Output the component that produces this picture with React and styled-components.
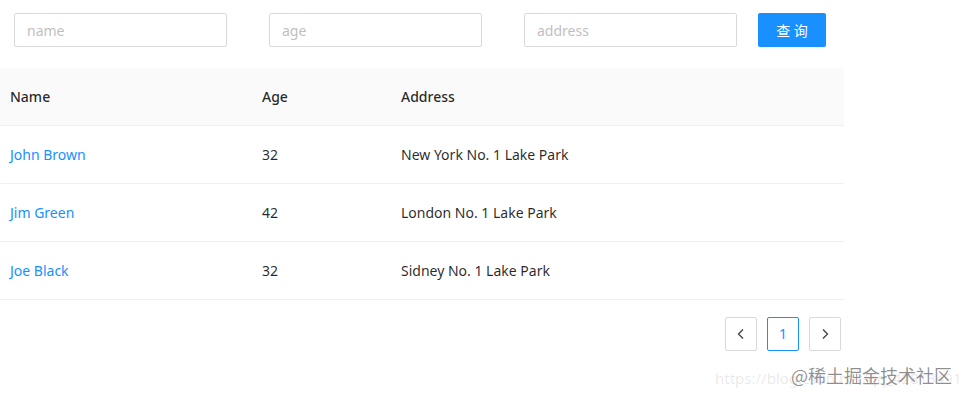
import styled, { createGlobalStyle } from "styled-components";

const GlobalStyle = createGlobalStyle`
  body {
    margin: 0;
    background: #fff;
    font-family: "Noto Sans", "Noto Sans CJK SC", sans-serif;
    font-size: 14px;
    color: rgba(0, 0, 0, 0.85);
  }
`;

const data = [
  { key: 1, name: "John Brown", age: 32, address: "New York No. 1 Lake Park" },
  { key: 2, name: "Jim Green", age: 42, address: "London No. 1 Lake Park" },
  { key: 3, name: "Joe Black", age: 32, address: "Sidney No. 1 Lake Park" },
];

function App() {
  return (
    <Page>
      <GlobalStyle />
      {/* 검색 영역 */}
      <SearchBar>
        <Input placeholder="name" />
        <Input placeholder="age" />
        <Input placeholder="address" />
        <Button>查 询</Button>
      </SearchBar>

      <Table>
        <thead>
          <tr>
            <Th $w={252}>Name</Th>
            <Th $w={139}>Age</Th>
            <Th>Address</Th>
          </tr>
        </thead>
        <tbody>
          {data.map((row) => (
            <tr key={row.key}>
              <Td>
                <NameLink href="#">{row.name}</NameLink>
              </Td>
              <Td>{row.age}</Td>
              <Td>{row.address}</Td>
            </tr>
          ))}
        </tbody>
      </Table>

      <Pager>
        <PageItem>
          <svg width="12" height="12" viewBox="0 0 12 12" fill="none">
            <path d="M8 1.5 3.5 6 8 10.5" stroke="rgba(0,0,0,0.75)" strokeWidth="1.3" />
          </svg>
        </PageItem>
        <PageItem $active>1</PageItem>
        <PageItem>
          <svg width="12" height="12" viewBox="0 0 12 12" fill="none">
            <path d="M4 1.5 8.5 6 4 10.5" stroke="rgba(0,0,0,0.75)" strokeWidth="1.3" />
          </svg>
        </PageItem>
      </Pager>

      <Watermark>
        <Faint>https://blog.csdn.net/qq_42813491</Faint>
        <Mark>@稀土掘金技术社区</Mark>
      </Watermark>
    </Page>
  );
}

export default App;

const Page = styled.div`
  position: relative;
  width: 967px;
  height: 400px;
  overflow: hidden;
`;

const SearchBar = styled.div`
  display: flex;
  align-items: flex-start;
  gap: 42px;
  padding: 13px 0 0 14px;
  height: 55px;
  box-sizing: border-box;
`;

const Input = styled.input`
  width: 213px;
  height: 34px;
  box-sizing: border-box;
  border: 1px solid #d9d9d9;
  border-radius: 2px;
  padding: 4px 12px;
  font-family: inherit;
  font-size: 14px;
  outline: none;

  &::placeholder {
    color: #bfbfbf;
  }
`;

const Button = styled.button`
  margin-left: -21px;
  width: 68px;
  height: 34px;
  border: none;
  border-radius: 2px;
  background: #1890ff;
  color: #fff;
  font-family: inherit;
  font-size: 14px;
  cursor: pointer;
`;

const Table = styled.table`
  margin-top: 13px;
  width: 844px;
  border-collapse: collapse;
  table-layout: fixed;
  text-align: left;
`;

const Th = styled.th`
  width: ${(p) => (p.$w ? `${p.$w}px` : "auto")};
  height: 57px;
  padding: 0 10px;
  box-sizing: border-box;
  background: #fafafa;
  font-weight: 500;
  color: rgba(0, 0, 0, 0.85);
  border-bottom: 1px solid #f0f0f0;
`;

const Td = styled.td`
  height: 58px;
  padding: 0 10px;
  box-sizing: border-box;
  border-bottom: 1px solid #f0f0f0;
  color: rgba(0, 0, 0, 0.85);
`;

const NameLink = styled.a`
  color: #1890ff;
  text-decoration: none;
`;

const Pager = styled.div`
  display: flex;
  gap: 10px;
  width: 841px;
  justify-content: flex-end;
  margin-top: 17px;
`;

const PageItem = styled.div`
  width: 32px;
  height: 34px;
  box-sizing: border-box;
  display: flex;
  align-items: center;
  justify-content: center;
  border: 1px solid ${(p) => (p.$active ? "#1890ff" : "#d9d9d9")};
  border-radius: 2px;
  color: ${(p) => (p.$active ? "#1890ff" : "rgba(0,0,0,0.85)")};
  font-size: 14px;
`;

const Watermark = styled.div`
  position: absolute;
  right: 0;
  top: 362px;
  width: 260px;
  height: 30px;
`;

const Faint = styled.span`
  position: absolute;
  left: 8px;
  top: 6px;
  font-family: "Noto Sans", sans-serif;
  font-size: 15px;
  color: rgba(0, 0, 0, 0.1);
  white-space: nowrap;
`;

const Mark = styled.span`
  position: absolute;
  left: 84px;
  top: 0;
  font-family: "Noto Sans CJK SC", sans-serif;
  font-size: 18px;
  color: rgba(0, 0, 0, 0.45);
  white-space: nowrap;
  text-shadow: 0 0 1px #fff;
`;
